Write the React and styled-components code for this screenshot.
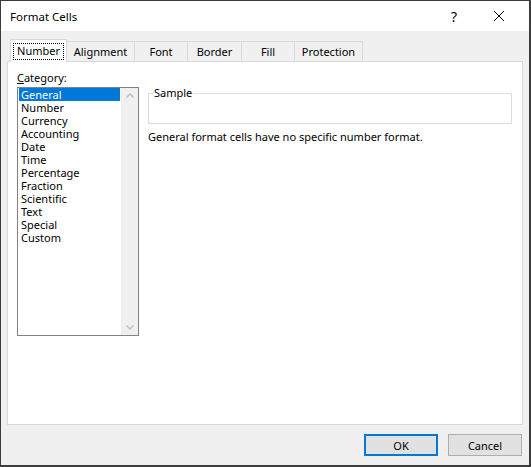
import React from "react";
import styled, { createGlobalStyle } from "styled-components";

const Global = createGlobalStyle`
  html, body { margin: 0; padding: 0; background: #f0f0f0; }
  body { font-family: "Noto Sans", "DejaVu Sans", sans-serif; font-size: 11px; color: #000; }
  * { box-sizing: border-box; }
`;

const Window = styled.div`
  width: 531px;
  height: 467px;
  display: flex;
  flex-direction: column;
  border-style: solid;
  border-color: #3c3c3c;
  border-width: 1px 2px 2px 1px;
  background: #f0f0f0;
`;

const TitleBar = styled.div`
  height: 30px;
  flex: none;
  background: #fff;
  display: flex;
  align-items: center;
  padding-left: 9px;
  font-size: 11.5px;
`;

const Title = styled.div`
  flex: 1;
`;

const TitleButton = styled.div`
  width: ${(p) => p.$w}px;
  display: flex;
  align-items: center;
  justify-content: center;
  height: 100%;
  font-size: 14px;
`;

const Body = styled.div`
  flex: 1;
  display: flex;
  flex-direction: column;
  padding: 8px 6px 0 6px;
`;

const TabStrip = styled.div`
  display: flex;
  align-items: flex-start;
  height: 23px;
  padding-left: 3px;
  position: relative;
  z-index: 1;
`;

const Tab = styled.div`
  height: ${(p) => (p.$active ? 23 : 21)}px;
  margin-top: ${(p) => (p.$active ? 0 : 2)}px;
  width: ${(p) => p.$w}px;
  display: flex;
  align-items: center;
  justify-content: center;
  background: ${(p) => (p.$active ? "#fff" : "#f0f0f0")};
  border: 1px solid #d9d9d9;
  border-bottom: ${(p) => (p.$active ? "none" : "1px solid #d9d9d9")};
  border-left: ${(p) => (p.$first ? "1px solid #d9d9d9" : "none")};
  padding-top: ${(p) => (p.$active ? 1 : 0)}px;
  font-size: 11px;
  position: relative;
  z-index: ${(p) => (p.$active ? 2 : 1)};
`;

const Focus = styled.span`
  outline: 1px dotted #000;
  padding: 0px 3px 1px;
  line-height: 14px;
`;

const Panel = styled.div`
  height: 364px;
  margin-top: -1px;
  background: #fff;
  border: 1px solid #d9d9d9;
  display: flex;
  padding: 7px 10px 0 9px;
  gap: 9px;
`;

const LeftCol = styled.div`
  display: flex;
  flex-direction: column;
  width: 122px;
`;

const Label = styled.div`
  height: 18px;
  line-height: 18px;
`;

const ListBox = styled.div`
  height: 249px;
  border: 1px solid #828282;
  display: flex;
`;

const Items = styled.div`
  flex: 1;
  padding: 0 1px;
`;

const Item = styled.div`
  height: 13px;
  line-height: 13px;
  padding-left: 2px;
  background: ${(p) => (p.$sel ? "#0078d7" : "transparent")};
  color: ${(p) => (p.$sel ? "#fff" : "#000")};
  white-space: nowrap;
`;

const Scroll = styled.div`
  width: 17px;
  background: #f0f0f0;
  display: flex;
  flex-direction: column;
  justify-content: space-between;
  align-items: center;
  padding: 5px 0;
`;

const RightCol = styled.div`
  flex: 1;
  display: flex;
  flex-direction: column;
  padding-top: 24px;
`;

const Group = styled.div`
  height: 31px;
  border: 1px solid #dcdcdc;
  position: relative;
`;

const Legend = styled.span`
  position: absolute;
  top: -8px;
  left: 4px;
  padding: 0 1px;
  background: #fff;
  line-height: 14px;
`;

const Desc = styled.div`
  margin-top: 5px;
  line-height: 16px;
`;

const Footer = styled.div`
  flex: 1;
  display: flex;
  justify-content: flex-end;
  align-items: flex-start;
  gap: 10px;
  padding-right: 1px;
  padding-top: 9px;
`;

const Button = styled.div`
  width: 74px;
  height: 22px;
  display: flex;
  align-items: center;
  justify-content: center;
  background: #e1e1e1;
  border: ${(p) => (p.$default ? "2px solid #0078d7" : "1px solid #adadad")};
  font-size: 11px;
`;

const Chevron = ({ up }) => (
  <svg width="8" height="5" viewBox="0 0 8 5">
    <path
      d={up ? "M0.5 4.5 L4 1 L7.5 4.5" : "M0.5 0.5 L4 4 L7.5 0.5"}
      fill="none"
      stroke="#c2c2c2"
      strokeWidth="1.5"
    />
  </svg>
);

const categories = [
  "General",
  "Number",
  "Currency",
  "Accounting",
  "Date",
  "Time",
  "Percentage",
  "Fraction",
  "Scientific",
  "Text",
  "Special",
  "Custom",
];

const tabs = [
  { name: "Number", w: 57 },
  { name: "Alignment", w: 68 },
  { name: "Font", w: 53 },
  { name: "Border", w: 54 },
  { name: "Fill", w: 53 },
  { name: "Protection", w: 68 },
];

export default function App() {
  return (
    <>
      <Global />
      <Window>
        <TitleBar>
          <Title>Format Cells</Title>
          <TitleButton $w={30}>?</TitleButton>
          <TitleButton $w={60}>
            <svg width="12" height="12" viewBox="0 0 12 12">
              <path d="M1 1 L11 11 M11 1 L1 11" stroke="#000" strokeWidth="1" />
            </svg>
          </TitleButton>
        </TitleBar>
        <Body>
          <TabStrip>
            {tabs.map((t, i) => (
              <Tab key={t.name} $w={t.w} $active={i === 0} $first={i === 0}>
                {i === 0 ? <Focus>{t.name}</Focus> : t.name}
              </Tab>
            ))}
          </TabStrip>
          <Panel>
            <LeftCol>
              <Label>
                <u>C</u>ategory:
              </Label>
              <ListBox>
                <Items>
                  {categories.map((c, i) => (
                    <Item key={c} $sel={i === 0}>
                      {c}
                    </Item>
                  ))}
                </Items>
                <Scroll>
                  <Chevron up />
                  <Chevron />
                </Scroll>
              </ListBox>
            </LeftCol>
            <RightCol>
              <Group>
                <Legend>Sample</Legend>
              </Group>
              <Desc>General format cells have no specific number format.</Desc>
            </RightCol>
          </Panel>
          <Footer>
            <Button $default>OK</Button>
            <Button>Cancel</Button>
          </Footer>
        </Body>
      </Window>
    </>
  );
}
